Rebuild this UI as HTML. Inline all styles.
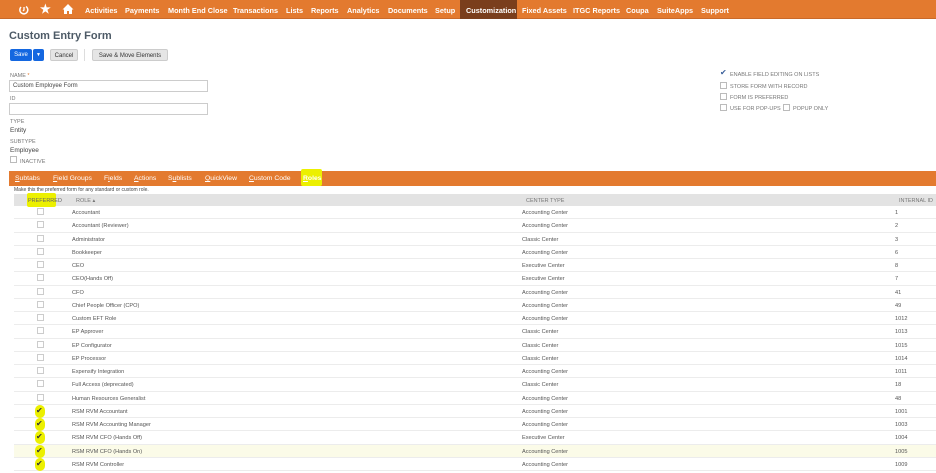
<!DOCTYPE html>
<html><head><meta charset="utf-8"><style>
*{margin:0;padding:0;box-sizing:border-box}
body{width:936px;height:473px;overflow:hidden;background:#fff;font-family:"Liberation Sans",sans-serif;color:#333;position:relative}
.a{position:absolute;white-space:nowrap}
#nav{position:absolute;left:0;top:0;width:936px;height:19px;background:#e37a2f;border-bottom:1px solid #c9692a}
#nav .a{color:#fff;font-size:7.3px;font-weight:bold;top:6px}
.lbl{font-size:5.5px;color:#777}
.val{font-size:6.5px;color:#444}
.inp{position:absolute;border:1px solid #ccc;background:#fff;height:12px}
.cb{position:absolute;width:7px;height:7px;border:1px solid #bbb;background:#fff}
.btn{position:absolute;top:49px;height:12px;border-radius:2px;font-size:6px;text-align:center;line-height:12px}
#tabs{position:absolute;left:9px;top:171px;width:927px;height:15px;background:#e37a2f}
#tabs .a{color:#fff;font-size:6.8px;top:4px}
#tabs u{text-decoration:underline}
.row{position:absolute;left:14px;width:922px;height:13.26px;border-bottom:1px solid #ececec;font-size:5.6px;color:#555}
.row span{position:absolute;top:4px}
.hl{position:absolute;background:#ecf000;border-radius:3px}
</style></head><body>
<div id="nav">
<div class="a" style="left:460px;top:0;width:57px;height:19px;background:#7a3e1c"></div>
<svg class="a" style="left:18px;top:4px" width="12" height="12" viewBox="0 0 12 12"><path d="M3 3a4 4 0 1 0 5-0.5" fill="none" stroke="#fff" stroke-width="1.5"/><path d="M6 3v3l-1 1" stroke="#fff" stroke-width="1.3" fill="none"/></svg>
<div class="a" style="left:40px;top:2px;font-size:12px;color:#fff">★</div>
<svg class="a" style="left:62px;top:3px" width="12" height="12" viewBox="0 0 12 12"><path d="M6 1L0.5 6.5H2V11h3V8h2v3h3V6.5h1.5z" fill="#fff"/></svg>
<div class="a" style="left:85px">Activities</div>
<div class="a" style="left:125px">Payments</div>
<div class="a" style="left:168px">Month End Close</div>
<div class="a" style="left:233px">Transactions</div>
<div class="a" style="left:286px">Lists</div>
<div class="a" style="left:311px">Reports</div>
<div class="a" style="left:347px">Analytics</div>
<div class="a" style="left:388px">Documents</div>
<div class="a" style="left:435px">Setup</div>
<div class="a" style="left:466px">Customization</div>
<div class="a" style="left:522px">Fixed Assets</div>
<div class="a" style="left:573px">ITGC Reports</div>
<div class="a" style="left:626px">Coupa</div>
<div class="a" style="left:657px">SuiteApps</div>
<div class="a" style="left:701px">Support</div>
</div>
<div class="a" style="left:9px;top:30px;font-size:11px;font-weight:bold;color:#4d5a66">Custom Entry Form</div>
<div class="btn" style="left:10px;width:22px;background:#1467e0;color:#fff">Save</div>
<div class="btn" style="left:33px;width:11px;background:#1467e0;color:#fff;font-size:5px">▼</div>
<div class="btn" style="left:50px;width:28px;background:#e5e5e5;border:1px solid #ccc">Cancel</div>
<div class="a" style="left:84px;top:49px;width:1px;height:12px;background:#ddd"></div>
<div class="btn" style="left:92px;width:76px;background:#e5e5e5;border:1px solid #ccc">Save &amp; Move Elements</div>
<div class="a lbl" style="left:10px;top:73px">NAME <span style="color:#e37a2f">*</span></div>
<div class="inp" style="left:9px;top:80px;width:199px"><span class="a val" style="left:3px;top:2px;font-size:6px">Custom Employee Form</span></div>
<div class="a lbl" style="left:10px;top:96px">ID</div>
<div class="inp" style="left:9px;top:103px;width:199px"></div>
<div class="a lbl" style="left:10px;top:119px">TYPE</div>
<div class="a val" style="left:10px;top:127px">Entity</div>
<div class="a lbl" style="left:10px;top:139px">SUBTYPE</div>
<div class="a val" style="left:10px;top:147px">Employee</div>
<div class="cb" style="left:10px;top:156px"></div>
<div class="a lbl" style="left:20px;top:159px">INACTIVE</div>
<div class="a" style="left:720px;top:68px;font-size:8px;color:#3a5f9a">✔</div>
<div class="a lbl" style="left:730px;top:72px">ENABLE FIELD EDITING ON LISTS</div>
<div class="cb" style="left:720px;top:82px"></div><div class="a lbl" style="left:730px;top:84px">STORE FORM WITH RECORD</div>
<div class="cb" style="left:720px;top:93px"></div><div class="a lbl" style="left:730px;top:95px">FORM IS PREFERRED</div>
<div class="cb" style="left:720px;top:104px"></div><div class="a lbl" style="left:730px;top:106px">USE FOR POP-UPS</div>
<div class="cb" style="left:783px;top:104px"></div><div class="a lbl" style="left:793px;top:106px">POPUP ONLY</div>
<div id="tabs">
<div class="hl" style="left:292px;top:-2px;width:21px;height:17px;border-radius:2px"></div>
<div class="a" style="left:6px"><u>S</u>ubtabs</div>
<div class="a" style="left:44px"><u>F</u>ield Groups</div>
<div class="a" style="left:95px">F<u>i</u>elds</div>
<div class="a" style="left:125px"><u>A</u>ctions</div>
<div class="a" style="left:159px">S<u>u</u>blists</div>
<div class="a" style="left:196px"><u>Q</u>uickView</div>
<div class="a" style="left:240px"><u>C</u>ustom Code</div>
<div class="a" style="left:294px;font-weight:bold"><u>R</u>oles</div>
</div>
<div class="a" style="left:14px;top:187px;font-size:5px;color:#444">Make this the preferred form for any standard or custom role.</div>
<div class="a" style="left:14px;top:194px;width:922px;height:12px;background:#e3e3e3"></div>
<div class="hl" style="left:27px;top:193px;width:29px;height:14px;border-radius:2px"></div>
<div class="a lbl" style="left:28px;top:198px;color:#666">PREFERRED</div>
<div class="a lbl" style="left:76px;top:198px">ROLE ▴</div>
<div class="a lbl" style="left:526px;top:198px">CENTER TYPE</div>
<div class="a lbl" style="left:899px;top:198px">INTERNAL ID</div>
<div id="rows"></div>
<script>
var d=[["Accountant","Accounting Center","1"],["Accountant (Reviewer)","Accounting Center","2"],["Administrator","Classic Center","3"],["Bookkeeper","Accounting Center","6"],["CEO","Executive Center","8"],["CEO(Hands Off)","Executive Center","7"],["CFO","Accounting Center","41"],["Chief People Officer (CPO)","Accounting Center","49"],["Custom EFT Role","Accounting Center","1012"],["EP Approver","Classic Center","1013"],["EP Configurator","Classic Center","1015"],["EP Processor","Classic Center","1014"],["Expensify Integration","Accounting Center","1011"],["Full Access (deprecated)","Classic Center","18"],["Human Resources Generalist","Accounting Center","48"],["RSM RVM Accountant","Accounting Center","1001"],["RSM RVM Accounting Manager","Accounting Center","1003"],["RSM RVM CFO (Hands Off)","Executive Center","1004"],["RSM RVM CFO (Hands On)","Accounting Center","1005"],["RSM RVM Controller","Accounting Center","1009"]];
var h='';
d.forEach(function(r,i){var t=206+13.26*i;var c=i>=15;
h+='<div class="row" style="top:'+t+'px;'+(i==18?'background:#fbfbe8':'')+'">'+
(c?'<div class="hl" style="left:21px;top:0;width:10px;height:13px;border-radius:5px"></div><span style="left:22px;top:1px;font-size:8px;color:#333">✔</span>':'<div class="cb" style="left:23px;top:2px;border-color:#ccc"></div>')+
'<span style="left:58px">'+r[0]+'</span><span style="left:508px">'+r[1]+'</span><span style="left:881px">'+r[2]+'</span></div>';});
document.getElementById('rows').innerHTML=h;
</script>
</body></html>
